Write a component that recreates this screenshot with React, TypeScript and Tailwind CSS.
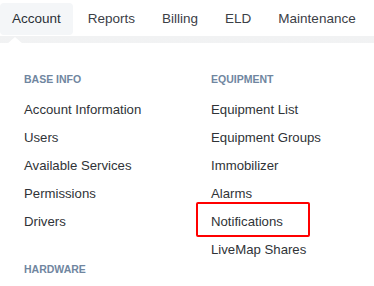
import React from "react";

const font = { fontFamily: '"Liberation Sans", Arial, sans-serif' };

export default function App() {
  const nav = ["Account", "Reports", "Billing", "ELD", "Maintenance"];
  const col1 = ["Account Information", "Users", "Available Services", "Permissions", "Drivers"];
  const col2 = ["Equipment List", "Equipment Groups", "Immobilizer", "Alarms", "Notifications", "LiveMap Shares"];
  return (
    <div className="w-[374px] h-[286px] bg-white overflow-hidden relative" style={font}>
      <div className="flex items-center h-[36px] pt-[3px] pb-[1px] gap-[3px]">
        {nav.map((n, i) => (
          <div
            key={n}
            className={
              "h-[32px] flex items-center px-3 rounded-[4px] text-[13.5px] " +
              (i === 0 ? "bg-[#f4f6f8] text-[#2a2f36]" : "text-[#3b4046]")
            }
          >
            {n}
          </div>
        ))}
      </div>
      <div className="relative bg-gradient-to-b from-[#f1f2f3] to-white h-[250px]">
        <div className="absolute left-[7px] top-[1px] w-0 h-0 border-l-[8px] border-r-[8px] border-b-[7px] border-l-transparent border-r-transparent border-b-white" />
        <div className="absolute inset-x-0 top-[7px] bottom-0 bg-white" />
        <div className="relative grid grid-cols-[187px_187px] pl-6 pt-[36px]">
          <div>
            <div className="text-[10.5px] font-bold text-[#7086a0] leading-[14px] mb-[10px]">BASE INFO</div>
            {col1.map((t) => (
              <div key={t} className="text-[13.2px] leading-[28px] text-[#2f3337]">{t}</div>
            ))}
            <div className="text-[10.5px] font-bold text-[#7086a0] leading-[14px] mt-[26px]">HARDWARE</div>
          </div>
          <div>
            <div className="text-[10.5px] font-bold text-[#7086a0] leading-[14px] mb-[10px]">EQUIPMENT</div>
            {col2.map((t) => (
              <div key={t} className="relative text-[13.2px] leading-[28px] text-[#2f3337]">
                {t}
                {t === "Notifications" && (
                  <div className="absolute left-[-15px] top-[-6px] w-[114px] h-[35px] border-2 border-[#ff0000] rounded-[2px]" />
                )}
              </div>
            ))}
          </div>
        </div>
      </div>
    </div>
  );
}
